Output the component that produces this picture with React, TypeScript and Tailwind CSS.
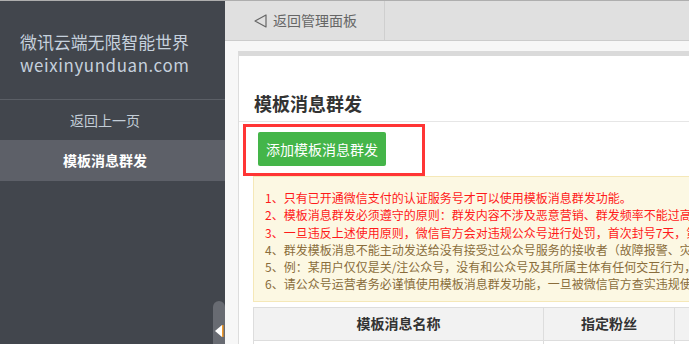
import React from "react";

const font = { fontFamily: '"Noto Sans CJK SC", "Noto Sans", sans-serif' };

export default function App() {
  return (
    <div className="w-[689px] h-[344px] overflow-hidden flex flex-col bg-[#f7f7f7]" style={font}>
      <div className="h-px bg-[#aeaeae] shrink-0" />
      <div className="flex flex-1 min-h-0">
        {/* Sidebar */}
        <div className="relative w-[225px] shrink-0 bg-[#42464d] flex flex-col">
          <div className="h-[99px] border-b border-[#5b5f66] pl-[20px] pt-[29px] text-[#c6d1dd] text-[16.9px] leading-[23px]">
            <div>微讯云端无限智能世界</div>
            <div className="tracking-[0.6px]">weixinyunduan.com</div>
          </div>
          <div className="h-[40px] pr-[15px] flex items-center justify-center text-[14px] text-[#c3cdd7]">返回上一页</div>
          <div className="h-[41px] pr-[15px] flex items-center justify-center text-[14px] font-bold text-white bg-[#5d6068]">模板消息群发</div>
          <div className="absolute left-[213px] top-[300px] w-[12px] h-[60px] rounded-t-[6px] bg-[#686b72]">
            <svg width="12" height="16" viewBox="0 0 12 16" className="absolute left-0 top-[23px]">
              <polygon points="2,7 9,1 9,13" fill="#ffffff" />
              <rect x="9" y="1" width="1.5" height="12" fill="#f39b2a" />
            </svg>
          </div>
        </div>
        {/* Main */}
        <div className="flex-1 min-w-0 flex flex-col">
          <div className="h-[40px] shrink-0 bg-[#e0e0e0] border-b border-[#cccccc] flex">
            <div className="w-[160px] border-r border-[#cfcfcf] flex items-center pl-[29px] gap-[6px] text-[14px] text-[#666666]">
              <svg width="13" height="14" viewBox="0 0 13 14">
                <polygon points="1,7 12,1 12,13" fill="none" stroke="#666666" strokeWidth="1.2" strokeLinejoin="round" />
              </svg>
              <span>返回管理面板</span>
            </div>
          </div>
          <div className="flex-1 min-h-0 pl-[13px] pt-[10px]">
            <div className="relative h-full bg-white border-t-[5px] border-t-[#dadada] border-l border-l-[#dddddd]">
              <div className="border-b border-[#e6e6e6] pt-[34px] pb-[5px] pl-[15px]">
                <div className="text-[18px] font-bold text-[#333333] leading-[26px]">模板消息群发</div>
              </div>
              <div className="pl-[19px] pt-[10px]">
                <button className="w-[128px] h-[34px] rounded-[2px] bg-[#44b549] text-white text-[14px] flex items-center justify-center">添加模板消息群发</button>
              </div>
              <div className="absolute left-[4px] top-[68px] w-[182px] h-[52px] border-[3px] border-[#ff3535]" />
              <div className="ml-[14px] mt-[10px] w-[600px] border border-[#f5e8b8] bg-[#fcf8e3] pt-[12px] pb-[8px] pl-[11px] text-[12px] leading-[17.3px] whitespace-nowrap overflow-hidden">
                <div className="text-[#ff1a1a]">1、只有已开通微信支付的认证服务号才可以使用模板消息群发功能。</div>
                <div className="text-[#ff1a1a]">2、模板消息群发必须遵守的原则：群发内容不涉及恶意营销、群发频率不能过高，否则将被封号。</div>
                <div className="text-[#ff1a1a]">3、一旦违反上述使用原则，微信官方会对违规公众号进行处罚，首次封号7天，第二次封号30天。</div>
                <div className="text-[#8a6d3b]">4、群发模板消息不能主动发送给没有接受过公众号服务的接收者（故障报警、灾害预警除外）。</div>
                <div className="text-[#8a6d3b]">5、例：某用户仅仅是关/注公众号，没有和公众号及其所属主体有任何交互行为，则不能发送。</div>
                <div className="text-[#8a6d3b]">6、请公众号运营者务必谨慎使用模板消息群发功能，一旦被微信官方查实违规使用，后果自负。</div>
              </div>
              <div className="ml-[14px] mt-[5px] w-[600px] border border-[#dddddd]">
                <div className="flex h-[32px] bg-[#f2f2f2] text-[14px] font-bold text-[#333333]">
                  <div className="w-[290px] border-r border-[#dddddd] flex items-center justify-center">模板消息名称</div>
                  <div className="w-[131px] border-r border-[#dddddd] flex items-center justify-center">指定粉丝</div>
                  <div className="flex-1 flex items-center justify-center">操作</div>
                </div>
                <div className="flex h-[40px] border-t border-[#dddddd] bg-white">
                  <div className="w-[290px] border-r border-[#dddddd]" />
                  <div className="w-[131px] border-r border-[#dddddd]" />
                  <div className="flex-1" />
                </div>
              </div>
            </div>
          </div>
        </div>
      </div>
    </div>
  );
}
